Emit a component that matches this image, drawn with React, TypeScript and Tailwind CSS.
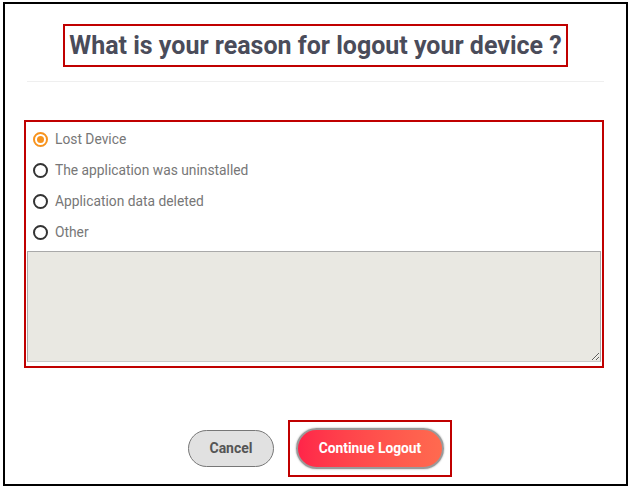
import { useState } from "react";

const reasons = [
  "Lost Device",
  "The application was uninstalled",
  "Application data deleted",
  "Other",
];

export default function App() {
  const [picked, setPicked] = useState(0);

  return (
    <div className="bg-white w-[632px] h-[490px] pt-[2px] pl-[3px] font-['Roboto',sans-serif]">
      <div className="w-[625px] h-[484px] border-[2.5px] border-black flex flex-col">
        {/* Heading */}
        <div className="flex justify-center mt-[20px]">
          <div className="w-[505px] h-[43px] border-2 border-[#c00000] flex items-center justify-center">
            <h1 className="text-[25px] font-bold text-[#4a4c5a] whitespace-nowrap">
              What is your reason for logout your device ?
            </h1>
          </div>
        </div>

        <div className="mx-[22px] mt-[14px] h-px bg-[#efefef]" />

        {/* Reasons */}
        <div className="ml-[19px] mt-[38px] w-[580px] h-[248px] border-2 border-[#c00000] pt-[2px] px-px flex flex-col">
          {reasons.map((r, i) => (
            <label
              key={r}
              className="h-[31px] flex items-center gap-[7px] pl-[6px] cursor-pointer"
              onClick={() => setPicked(i)}
            >
              <span
                className={`w-[15px] h-[15px] rounded-full border-2 flex items-center justify-center ${
                  picked === i ? "border-[#f7931e]" : "border-[#333333]"
                }`}
              >
                {picked === i && <span className="w-[7px] h-[7px] rounded-full bg-[#f7931e]" />}
              </span>
              <span className="text-[13.8px] text-[#777777]">{r}</span>
            </label>
          ))}
          <textarea className="mt-[3px] h-[111px] w-full bg-[#e9e8e2] border border-[#a9a9a9] border-b-[#c9c9c9] outline-none resize-y" />
        </div>

        {/* Actions */}
        <div className="mt-[52px] flex items-center pl-[183px] gap-[14px]">
          <button className="w-[86px] h-[37px] rounded-full bg-[#e1e1e1] border border-[#777777] text-[14px] font-bold text-[#555555]">
            Cancel
          </button>
          <div className="w-[164px] h-[57px] border-2 border-[#c00000] flex items-center justify-center">
            <button className="w-[148px] h-[41px] rounded-full bg-gradient-to-r from-[#ff2449] to-[#ff6a4f] border-2 border-[#9a9a9a] text-[13.8px] font-bold text-white shadow-[0_0_2px_rgba(0,0,0,0.4)]">
              Continue Logout
            </button>
          </div>
        </div>
      </div>
    </div>
  );
}
